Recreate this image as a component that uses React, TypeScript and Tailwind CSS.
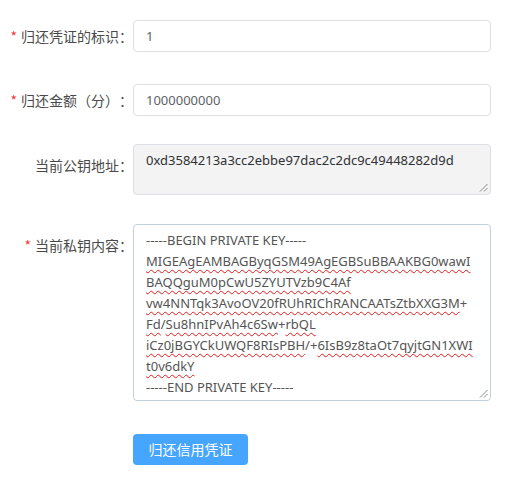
import React from "react";

const Grip = () => (
  <svg className="absolute right-[2px] bottom-[2px]" width="9" height="9" viewBox="0 0 9 9">
    <line x1="8.5" y1="1" x2="1" y2="8.5" stroke="#8a8a8a" strokeWidth="1" />
    <line x1="8.5" y1="5" x2="5" y2="8.5" stroke="#8a8a8a" strokeWidth="1" />
  </svg>
);

const W = ({ children }: { children: React.ReactNode }) => (
  <span className="underline decoration-wavy decoration-[#e21b1b] decoration-1 underline-offset-[3px] [text-decoration-skip-ink:none]">
    {children}
  </span>
);

const Label = ({ text, required, tall }: { text: string; required?: boolean; tall?: boolean }) => (
  <div
    className={
      "w-[133px] shrink-0 text-right text-[14px] text-[#4a4a4a] font-['Noto_Sans_CJK_SC',sans-serif] [text-spacing-trim:space-all] " +
      (tall ? "pt-[5px] leading-[32px]" : "leading-[32px]")
    }
  >
    {required && <span className="text-[#f03c3c] mr-[4px]">*</span>}
    {text}
  </div>
);

export default function App() {
  return (
    <div className="w-[521px] h-[482px] bg-white pt-[20px] font-['Noto_Sans','Noto_Sans_CJK_SC',sans-serif]">
      <div className="flex items-start">
        <Label text="归还凭证的标识：" required />
        <div className="w-[358px] h-[32px] border border-[#dcdfe6] rounded-[4px] pl-[12px] text-[13px] leading-[30px] text-[#606266]">
          1
        </div>
      </div>

      <div className="flex items-start mt-[32px]">
        <Label text="归还金额（分）：" required />
        <div className="w-[358px] h-[32px] border border-[#dcdfe6] rounded-[4px] pl-[12px] text-[13px] leading-[30px] text-[#606266]">
          1000000000
        </div>
      </div>

      <div className="flex items-start mt-[28px]">
        <Label text="当前公钥地址：" tall />
        <div className="relative w-[358px] h-[51px] border border-[#dcdfe6] rounded-[4px] bg-[#f3f3f3] pl-[12px] pt-[5px] text-[13px] leading-[21px] text-[#303133]">
          0xd3584213a3cc2ebbe97dac2c2dc9c49448282d9d
          <Grip />
        </div>
      </div>

      <div className="flex items-start mt-[29px]">
        <Label text="当前私钥内容：" required tall />
        <div className="relative w-[358px] h-[177px] overflow-hidden border border-[#c4cfdc] rounded-[4px] pl-[12px] pt-[5px] text-[13px] leading-[21px] text-[#555555] whitespace-pre">
          <div>-----BEGIN PRIVATE KEY-----</div>
          <div><W>MIGEAgEAMBAGByqGSM49AgEGBSuBBAAKBG0wawI</W></div>
          <div><W>BAQQguM0pCwU5ZYUTVzb9C4Af</W></div>
          <div><W>vw4NNTqk3AvoOV20fRUhRIChRANCAATsZtbXXG3M</W>+</div>
          <div><W>Fd</W>/<W>Su8hnIPvAh4c6Sw</W>+<W>rbQL</W></div>
          <div><W>iCz0jBGYCkUWQF8RIsPBH</W>/+<W>6IsB9z8taOt7qyjtGN1XWI</W></div>
          <div><W>t0v6dkY</W></div>
          <div>-----END PRIVATE KEY-----</div>
          <Grip />
        </div>
      </div>

      <div className="flex mt-[33px]">
        <div className="w-[133px] shrink-0" />
        <button className="w-[115px] h-[31px] rounded-[4px] bg-[#46a6ff] text-white text-[14px] leading-[31px] text-center font-['Noto_Sans_CJK_SC',sans-serif]">
          归还信用凭证
        </button>
      </div>
    </div>
  );
}
